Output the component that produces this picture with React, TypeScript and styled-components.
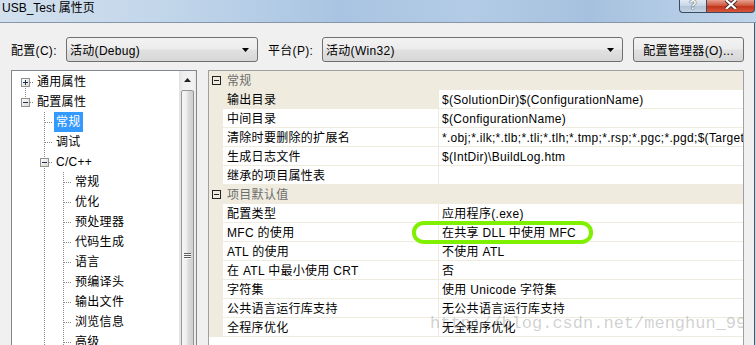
import React from "react";
import styled, { createGlobalStyle } from "styled-components";

const GlobalStyle = createGlobalStyle`
  html, body {
    margin: 0;
    padding: 0;
    background: #f0f0f0;
  }
  body {
    font-family: "Liberation Sans", "Noto Sans CJK SC", sans-serif;
    font-size: 12px;
    letter-spacing: 0.3px;
    color: #000;
  }
`;

const BEIGE = "#efecdf";

const Window = styled.div`
  position: relative;
  width: 756px;
  height: 345px;
  overflow: hidden;
  display: flex;
  flex-direction: column;
  background: #bcd2e9;
`;

const TitleBar = styled.div`
  height: 22px;
  display: flex;
  justify-content: space-between;
  align-items: flex-start;
  border-bottom: 1px solid #8696a8;
  background: linear-gradient(
    to right,
    #d2e0ee 0%,
    #c2d6ea 22%,
    #a9c4e2 45%,
    #b3cbe5 62%,
    #a6c1df 78%,
    #c0d5ea 100%
  );
`;

const Title = styled.div`
  padding: 1px 0 0 2px;
  line-height: 14px;
  letter-spacing: 0;
`;

const CaptionButtons = styled.div`
  display: flex;
  margin-right: 1px;
`;

const CaptionButton = styled.div<{ $w: number; $close?: boolean }>`
  width: ${(p) => p.$w}px;
  height: 13px;
  box-sizing: border-box;
  display: flex;
  justify-content: center;
  align-items: flex-start;
  border: 1px solid #3b4a5c;
  border-top: none;
  ${(p) => (p.$close ? "border-left: none;" : "")}
  border-radius: ${(p) => (p.$close ? "0 0 4px 0" : "0 0 0 4px")};
  background: ${(p) =>
    p.$close
      ? "linear-gradient(#e8a192, #d05a40 45%, #c3341c 55%, #d6573a)"
      : "linear-gradient(#e2eaf3, #c9d7e6 45%, #b3c5d9 55%, #c2d3e5)"};
  color: #fff;
  font-weight: bold;
  font-size: 12px;
  line-height: 11px;
  text-shadow: 0 0 1px #2c3a4c, 0 0 1px #2c3a4c;
`;

const Body = styled.div`
  flex: 1;
  min-height: 0;
  display: flex;
  flex-direction: column;
  background: #f0f0f0;
  border-right: 1px solid #4b596a;
  margin-right: 1px;
  padding: 14px 10px 0 11px;
`;

const Toolbar = styled.div`
  display: flex;
  align-items: center;
  height: 25px;
`;

const FieldLabel = styled.div<{ $w: number; $gap?: number }>`
  width: ${(p) => p.$w}px;
  margin-left: ${(p) => p.$gap ?? 0}px;
  white-space: nowrap;
`;

const Combo = styled.div<{ $w: number }>`
  width: ${(p) => p.$w}px;
  height: 25px;
  box-sizing: border-box;
  display: flex;
  align-items: center;
  justify-content: space-between;
  padding: 0 8px 0 3px;
  border: 1px solid #707070;
  border-radius: 3px;
  background: linear-gradient(#f3f3f3, #ececec 48%, #e1e1e1 52%, #d7d7d7);
`;

const PushButton = styled.div<{ $w: number; $gap: number }>`
  width: ${(p) => p.$w}px;
  margin-left: ${(p) => p.$gap}px;
  height: 25px;
  box-sizing: border-box;
  display: flex;
  align-items: center;
  justify-content: center;
  border: 1px solid #707070;
  border-radius: 3px;
  background: linear-gradient(#f3f3f3, #ececec 48%, #e1e1e1 52%, #d7d7d7);
`;

const Main = styled.div`
  display: flex;
  gap: 11px;
  margin-top: 8px;
  flex: 1;
  min-height: 0;
`;

const Tree = styled.div`
  width: 186px;
  height: 300px;
  flex-shrink: 0;
  box-sizing: border-box;
  display: flex;
  border: 1px solid #828790;
  background: #fff;
`;

const TreeList = styled.div`
  flex: 1;
  padding: 1px 0 0 3px;
`;

const TreeRow = styled.div`
  display: flex;
  height: 20px;
  align-items: center;
`;

const TreeLabel = styled.span<{ $selected?: boolean }>`
  margin-left: 1px;
  padding: 1px 2px 0;
  height: 19px;
  line-height: 19px;
  white-space: nowrap;
  background: ${(p) => (p.$selected ? "#3399ff" : "transparent")};
  color: ${(p) => (p.$selected ? "#fff" : "#000")};
`;

const ScrollBar = styled.div`
  width: 17px;
  display: flex;
  flex-direction: column;
  background: linear-gradient(to right, #e2e2e2, #eeeeee 20%, #f3f3f3 80%, #e9e9e9);
`;

const ScrollButton = styled.div`
  height: 18px;
  display: flex;
  align-items: center;
  justify-content: center;
`;

const Thumb = styled.div`
  margin: 1px 2px 0 2px;
  height: 280px;
  border: 1px solid #959595;
  border-radius: 2px;
  background: linear-gradient(to right, #f7f7f7, #ececec 45%, #dcdcdc 55%, #cfcfcf);
  display: flex;
  justify-content: center;
  padding-top: 162px;
  box-sizing: border-box;
`;

const Grip = styled.div`
  width: 7px;
  height: 6px;
  background: repeating-linear-gradient(to bottom, #5c5c5c 0 1px, #fafafa 1px 2px);
`;

const Grid = styled.div`
  width: 536px;
  height: 300px;
  flex-shrink: 0;
  box-sizing: border-box;
  border: 1px solid #a0a0a0;
  background: #fff;
`;

const CategoryRow = styled.div`
  height: 19px;
  display: flex;
  align-items: center;
  padding-left: 3px;
  background: ${BEIGE};
  color: #6d6d6d;
`;

const CategoryText = styled.span`
  margin-left: 6px;
  padding-top: 2px;
  line-height: 17px;
`;

const PropRow = styled.div`
  height: 19px;
  display: flex;
`;

const Margin = styled.div`
  width: 14px;
  background: ${BEIGE};
`;

const PropName = styled.div<{ $selected?: boolean }>`
  width: 216px;
  box-sizing: border-box;
  padding: 2px 0 0 4px;
  line-height: 16px;
  border-right: 1px solid ${BEIGE};
  border-bottom: 1px solid ${BEIGE};
  background: ${(p) => (p.$selected ? BEIGE : "#fff")};
  white-space: nowrap;
`;

const PropValue = styled.div`
  flex: 1;
  min-width: 0;
  padding: 2px 0 0 3px;
  line-height: 16px;
  border-bottom: 1px solid ${BEIGE};
  white-space: nowrap;
  overflow: hidden;
`;

const Highlight = styled.div`
  position: absolute;
  left: 412px;
  top: 221px;
  width: 181px;
  height: 23px;
  box-sizing: border-box;
  border: 4px solid #7ff000;
  border-radius: 12px / 11px;
  pointer-events: none;
`;

const Watermark = styled.div`
  position: absolute;
  left: 430px;
  top: 315px;
  width: 313px;
  overflow: hidden;
  font-family: "Liberation Mono", monospace;
  font-size: 17px;
  line-height: 18px;
  letter-spacing: 0;
  color: rgba(110, 110, 110, 0.32);
  white-space: nowrap;
  pointer-events: none;
`;

type TreeNode = {
  label: string;
  level: number;
  up: boolean;
  down: boolean;
  expander?: "plus" | "minus";
  selected?: boolean;
};

const tree: TreeNode[] = [
  { label: "通用属性", level: 0, up: false, down: true, expander: "plus" },
  { label: "配置属性", level: 0, up: true, down: false, expander: "minus" },
  { label: "常规", level: 1, up: true, down: true, selected: true },
  { label: "调试", level: 1, up: true, down: true },
  { label: "C/C++", level: 1, up: true, down: true, expander: "minus" },
  ...["常规", "优化", "预处理器", "代码生成", "语言", "预编译头", "输出文件", "浏览信息", "高级"].map(
    (label) => ({ label, level: 2, up: true, down: true })
  ),
];

// ancestors whose dotted line keeps running past the visible rows
const guideLines = [false, true];

const dot = { stroke: "#8a8a8a", strokeDasharray: "1 1", shapeRendering: "crispEdges" as const };

function Guide({ line }: { line: boolean }) {
  return (
    <svg width="19" height="20" viewBox="0 0 19 20" style={{ flexShrink: 0 }}>
      {line && <line x1="10.5" y1="0" x2="10.5" y2="20" {...dot} />}
    </svg>
  );
}

function Connector({ node }: { node: TreeNode }) {
  return (
    <svg width="19" height="20" viewBox="0 0 19 20" style={{ flexShrink: 0 }}>
      {node.up && <line x1="10.5" y1="0" x2="10.5" y2="10" {...dot} />}
      {node.down && <line x1="10.5" y1="10" x2="10.5" y2="20" {...dot} />}
      <line x1="11" y1="10.5" x2="19" y2="10.5" {...dot} />
      {node.expander && (
        <g shapeRendering="crispEdges">
          <defs>
            <linearGradient id="exp" x1="0" y1="0" x2="1" y2="1">
              <stop offset="0" stopColor="#ffffff" />
              <stop offset="1" stopColor="#d8d8d0" />
            </linearGradient>
          </defs>
          <rect x="6.5" y="6.5" width="8" height="8" fill="url(#exp)" stroke="#919191" />
          <line x1="8" y1="10.5" x2="13" y2="10.5" stroke="#1f2f56" />
          {node.expander === "plus" && <line x1="10.5" y1="8" x2="10.5" y2="13" stroke="#1f2f56" />}
        </g>
      )}
    </svg>
  );
}

function CategoryBox() {
  return (
    <svg width="9" height="9" viewBox="0 0 9 9" shapeRendering="crispEdges">
      <rect x="0.5" y="0.5" width="8" height="8" fill="none" stroke="#222" />
      <line x1="2" y1="4.5" x2="7" y2="4.5" stroke="#222" />
    </svg>
  );
}

function ComboArrow() {
  return (
    <svg width="7" height="4" viewBox="0 0 7 4">
      <path d="M0 0 H7 L3.5 4 Z" fill="#000" />
    </svg>
  );
}

type Prop = { name: string; value: string; selected?: boolean };

const sections: { title: string; props: Prop[] }[] = [
  {
    title: "常规",
    props: [
      { name: "输出目录", value: "$(SolutionDir)$(ConfigurationName)", selected: true },
      { name: "中间目录", value: "$(ConfigurationName)" },
      {
        name: "清除时要删除的扩展名",
        value: "*.obj;*.ilk;*.tlb;*.tli;*.tlh;*.tmp;*.rsp;*.pgc;*.pgd;$(TargetPath)",
      },
      { name: "生成日志文件", value: "$(IntDir)\\BuildLog.htm" },
      { name: "继承的项目属性表", value: "" },
    ],
  },
  {
    title: "项目默认值",
    props: [
      { name: "配置类型", value: "应用程序(.exe)" },
      { name: "MFC 的使用", value: "在共享 DLL 中使用 MFC" },
      { name: "ATL 的使用", value: "不使用 ATL" },
      { name: "在 ATL 中最小使用 CRT", value: "否" },
      { name: "字符集", value: "使用 Unicode 字符集" },
      { name: "公共语言运行库支持", value: "无公共语言运行库支持" },
      { name: "全程序优化", value: "无全程序优化" },
    ],
  },
];

const App = () => {
  return (
    <Window>
      <GlobalStyle />
      <TitleBar>
        <Title>USB_Test 属性页</Title>
        <CaptionButtons>
          <CaptionButton $w={28}>?</CaptionButton>
          <CaptionButton $w={48} $close>
            <svg width="14" height="9" viewBox="0 0 14 9">
              <path d="M2 0 L12 9 M12 0 L2 9" stroke="#3a2a2a" strokeWidth="4" />
              <path d="M2 0 L12 9 M12 0 L2 9" stroke="#fff" strokeWidth="2.2" />
            </svg>
          </CaptionButton>
        </CaptionButtons>
      </TitleBar>
      <Body>
        <Toolbar>
          <FieldLabel $w={55}>配置(C):</FieldLabel>
          <Combo $w={192}>
            <span>活动(Debug)</span>
            <ComboArrow />
          </Combo>
          <FieldLabel $w={54} $gap={10}>
            平台(P):
          </FieldLabel>
          <Combo $w={301}>
            <span>活动(Win32)</span>
            <ComboArrow />
          </Combo>
          <PushButton $w={111} $gap={10}>
            配置管理器(O)...
          </PushButton>
        </Toolbar>
        <Main>
          <Tree>
            <TreeList>
              {tree.map((node, i) => (
                <TreeRow key={i}>
                  {guideLines.slice(0, node.level).map((line, j) => (
                    <Guide key={j} line={line} />
                  ))}
                  <Connector node={node} />
                  <TreeLabel $selected={node.selected}>{node.label}</TreeLabel>
                </TreeRow>
              ))}
            </TreeList>
            <ScrollBar>
              <ScrollButton>
                <svg width="7" height="4" viewBox="0 0 7 4">
                  <path d="M0 4 H7 L3.5 0 Z" fill="#222" />
                </svg>
              </ScrollButton>
              <Thumb>
                <Grip />
              </Thumb>
            </ScrollBar>
          </Tree>
          <Grid>
            {sections.map((section) => (
              <React.Fragment key={section.title}>
                <CategoryRow>
                  <CategoryBox />
                  <CategoryText>{section.title}</CategoryText>
                </CategoryRow>
                {section.props.map((prop) => (
                  <PropRow key={prop.name}>
                    <Margin />
                    <PropName $selected={prop.selected}>{prop.name}</PropName>
                    <PropValue>{prop.value}</PropValue>
                  </PropRow>
                ))}
              </React.Fragment>
            ))}
          </Grid>
        </Main>
      </Body>
      <Highlight />
      <Watermark>http://blog.csdn.net/menghun_99</Watermark>
    </Window>
  );
};

export default App;
